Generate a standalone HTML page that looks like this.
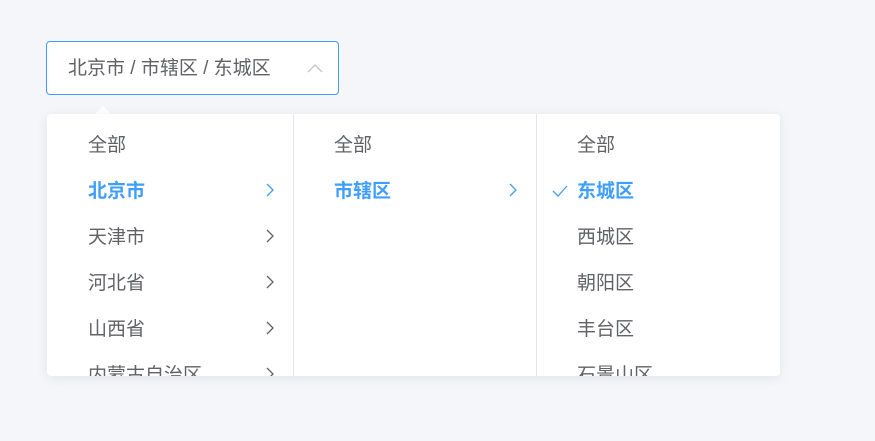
<!DOCTYPE html>
<html><head><meta charset="utf-8"><style>
body{margin:0;width:875px;height:441px;background:#f5f6fa;font-family:"Liberation Sans","Noto Sans CJK SC",sans-serif;position:relative;overflow:hidden}
.inp{position:absolute;left:46px;top:41px;width:291px;height:52px;border:1px solid #409eff;border-radius:4px;background:#fff;box-sizing:content-box}
.inp span{position:absolute;left:21px;top:16px;font-size:19px;color:#606266;line-height:22px}
.inp svg{position:absolute;right:15px;top:21px}
.caret{position:absolute;left:94px;top:106px;width:0;height:0;border-left:9px solid transparent;border-right:9px solid transparent;border-bottom:9px solid #fff}
.dd{position:absolute;left:47px;top:114px;width:733px;height:262px;background:#fff;border-radius:4px;box-shadow:0 2px 12px rgba(0,0,0,.08);overflow:hidden}
.col{position:absolute;top:0;height:262px;border-right:1px solid #e4e7ed}
.it{position:absolute;left:0;width:100%;height:46px;font-size:19px;line-height:46px;color:#606266}
.it b{font-weight:bold;color:#409eff}
.it .t{position:absolute;left:41px;top:2px}
.it svg{position:absolute;top:16px}
</style></head><body>
<div class="inp"><span>北京市 / 市辖区 / 东城区</span>
<svg width="16" height="10" viewBox="0 0 16 10"><path d="M1 9 L8 2 L15 9" fill="none" stroke="#c0c4cc" stroke-width="1.3"/></svg></div>
<div class="caret"></div>
<div class="dd">
<div class="col" style="left:0;width:246px">
<div class="it" style="top:7px"><span class="t">全部</span></div>
<div class="it" style="top:53px"><span class="t"><b>北京市</b></span><svg style="left:218px" width="10" height="14"><path d="M2 1 L8 7 L2 13" fill="none" stroke="#409eff" stroke-width="1.3"/></svg></div>
<div class="it" style="top:99px"><span class="t">天津市</span><svg style="left:218px" width="10" height="14"><path d="M2 1 L8 7 L2 13" fill="none" stroke="#606266" stroke-width="1.3"/></svg></div>
<div class="it" style="top:145px"><span class="t">河北省</span><svg style="left:218px" width="10" height="14"><path d="M2 1 L8 7 L2 13" fill="none" stroke="#606266" stroke-width="1.3"/></svg></div>
<div class="it" style="top:191px"><span class="t">山西省</span><svg style="left:218px" width="10" height="14"><path d="M2 1 L8 7 L2 13" fill="none" stroke="#606266" stroke-width="1.3"/></svg></div>
<div class="it" style="top:237px"><span class="t">内蒙古自治区</span><svg style="left:218px" width="10" height="14"><path d="M2 1 L8 7 L2 13" fill="none" stroke="#606266" stroke-width="1.3"/></svg></div>
</div>
<div class="col" style="left:246px;width:243px">
<div class="it" style="top:7px"><span class="t">全部</span></div>
<div class="it" style="top:53px"><span class="t"><b>市辖区</b></span><svg style="left:215px" width="10" height="14"><path d="M2 1 L8 7 L2 13" fill="none" stroke="#409eff" stroke-width="1.3"/></svg></div>
</div>
<div class="col" style="left:489px;width:244px;border:none">
<div class="it" style="top:7px"><span class="t">全部</span></div>
<div class="it" style="top:53px"><svg style="left:16px;top:18px" width="16" height="12"><path d="M1 6 L6 11 L15 1" fill="none" stroke="#409eff" stroke-width="1.3"/></svg><span class="t"><b>东城区</b></span></div>
<div class="it" style="top:99px"><span class="t">西城区</span></div>
<div class="it" style="top:145px"><span class="t">朝阳区</span></div>
<div class="it" style="top:191px"><span class="t">丰台区</span></div>
<div class="it" style="top:237px"><span class="t">石景山区</span></div>
</div>
</div>
</body></html>
